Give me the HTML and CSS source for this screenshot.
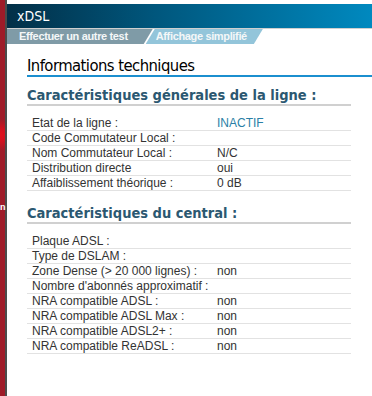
FILE: index.html
```html
<!DOCTYPE html>
<html lang="fr">
<head>
    <meta charset="UTF-8">
    <meta name="viewport" content="width=device-width, initial-scale=1.0">
    <title>xDSL</title>
    <link rel="stylesheet" href="styles.css">
</head>
<body>

    <div class="sidebar">
        <span class="sidebar-text">n</span>
    </div>

    <div class="main">
        <div class="topbar">xDSL</div>
        <div class="tabs">
            <a class="tab tab-first">Effectuer un autre test</a>
            <a class="tab tab-second">Affichage simplifié</a>
        </div>

        <div class="content">
            <h1>Informations techniques</h1>

            <h2>Caractéristiques générales de la ligne :</h2>
            <table>
                <tr><td class="label">Etat de la ligne :</td><td class="value status">INACTIF</td></tr>
                <tr><td class="label">Code Commutateur Local :</td><td class="value"></td></tr>
                <tr><td class="label">Nom Commutateur Local :</td><td class="value">N/C</td></tr>
                <tr><td class="label">Distribution directe</td><td class="value">oui</td></tr>
                <tr><td class="label">Affaiblissement théorique :</td><td class="value">0 dB</td></tr>
            </table>

            <h2>Caractéristiques du central :</h2>
            <table>
                <tr><td class="label">Plaque ADSL :</td><td class="value"></td></tr>
                <tr><td class="label">Type de DSLAM :</td><td class="value"></td></tr>
                <tr><td class="label">Zone Dense (&gt; 20 000 lignes) :</td><td class="value">non</td></tr>
                <tr><td class="label">Nombre d'abonnés approximatif :</td><td class="value"></td></tr>
                <tr><td class="label">NRA compatible ADSL :</td><td class="value">non</td></tr>
                <tr><td class="label">NRA compatible ADSL Max :</td><td class="value">non</td></tr>
                <tr><td class="label">NRA compatible ADSL2+ :</td><td class="value">non</td></tr>
                <tr><td class="label">NRA compatible ReADSL :</td><td class="value">non</td></tr>
            </table>
        </div>
    </div>

</body>
</html>
```

FILE: styles.css
```css
body {
    margin: 0;
    display: flex;
    min-height: 396px;
    background: white;
    font-family: "Liberation Sans", Arial, sans-serif;
    overflow: hidden;
}
.sidebar {
    width: 5px;
    flex-shrink: 0;
    border-right: 2px solid #4b4b4b;
    background: radial-gradient(circle at 0 135px, #e0101c 0, #d3101e 6px, rgba(158, 27, 40, 0) 16px), #9e1b28;
    padding-top: 200px;
}
.sidebar-text {
    display: block;
    color: white;
    font-size: 9px;
    font-weight: bold;
    line-height: 14px;
}
.main {
    flex: 1;
    min-width: 0;
}
.topbar {
    margin-top: 4px;
    height: 24px;
    line-height: 24px;
    padding-left: 10px;
    color: white;
    font-family: "DejaVu Sans Condensed", "DejaVu Sans", sans-serif;
    font-size: 14px;
    background: linear-gradient(to right, #022f47 0%, #00567c 40%, #0089bf 100%);
}
.tabs {
    display: flex;
    height: 15px;
    border-top: 1px solid #cfcfcf;
}
.tab {
    color: #f4f7f8;
    font-weight: bold;
    font-size: 11px;
    letter-spacing: -0.35px;
    line-height: 15px;
    white-space: nowrap;
}
.tab-first {
    background: #7f9ba7;
    padding: 0 25px 0 12px;
    clip-path: polygon(0 0, 100% 0, calc(100% - 9px) 100%, 0 100%);
}
.tab-second {
    background: #93c5da;
    margin-left: -7px;
    padding: 0 16px 0 10px;
    clip-path: polygon(9px 0, 100% 0, calc(100% - 9px) 100%, 0 100%);
}
.content {
    padding: 12px 21px 0 20px;
}
h1 {
    margin: 0 -21px 0 0;
    font-family: "DejaVu Sans Condensed", "DejaVu Sans", sans-serif;
    font-weight: normal;
    font-size: 16.5px;
    letter-spacing: -0.55px;
    color: #000;
    line-height: 19px;
    border-bottom: 2px solid #1b8fcf;
}
h2 {
    margin: 9px 0 0 0;
    font-family: "DejaVu Sans Condensed", "DejaVu Sans", sans-serif;
    font-size: 14.5px;
    font-weight: bold;
    color: #2b5871;
    line-height: 18px;
    border-bottom: 2px solid #d0d0d0;
}
table + h2 {
    margin-top: 13px;
}
table {
    width: 100%;
    table-layout: fixed;
    border-collapse: collapse;
    margin: 10px 0 0 0;
    font-size: 12px;
    color: #333;
}
td {
    height: 14px;
    padding: 0 0 0 5px;
    border-bottom: 1px solid #e2e2e2;
    line-height: 14px;
    white-space: nowrap;
}
.label {
    width: 180px;
}
.status {
    color: #2a7fa6;
}
```
